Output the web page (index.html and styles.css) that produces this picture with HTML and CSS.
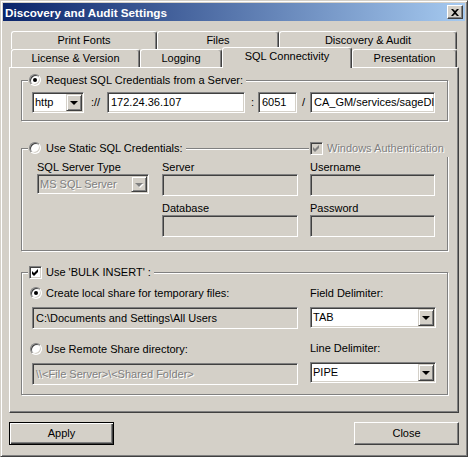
FILE: index.html
```html
<!DOCTYPE html>
<html lang="en">

<head>
    <meta charset="UTF-8">
    <meta name="viewport" content="width=device-width, initial-scale=1.0">
    <title>Discovery and Audit Settings</title>
    <link rel="stylesheet" href="styles.css">
</head>

<body>
    <div class="window">
        <div class="titlebar">
            <span class="title">Discovery and Audit Settings</span>
            <div class="close-btn">
                <svg width="8" height="7" viewBox="0 0 8 7"><path d="M0 0h2l2 2 2-2h2L5 3.5 8 7H6L4 5 2 7H0l3-3.5z" fill="#000"/></svg>
            </div>
        </div>

        <div class="content">
            <div class="tabs">
                <div class="tab-row">
                    <div class="tab w-print">Print Fonts</div>
                    <div class="tab w-files">Files</div>
                    <div class="tab w-disc">Discovery &amp; Audit</div>
                </div>
                <div class="tab-row">
                    <div class="tab w-license">License &amp; Version</div>
                    <div class="tab w-logging">Logging</div>
                    <div class="tab tab-active w-sql">SQL Connectivity</div>
                    <div class="tab w-pres">Presentation</div>
                </div>
            </div>

            <div class="panel">
                <!-- request credentials from server -->
                <div class="group group-server">
                    <div class="caption">
                        <span class="radio checked"></span>
                        <span>Request SQL Credentials from a Server:</span>
                    </div>
                    <div class="url-row">
                        <div class="combo w-http"><span class="combo-text">http</span><span class="drop"></span></div>
                        <span class="sep sep-proto">://</span>
                        <div class="edit w-host">172.24.36.107</div>
                        <span class="sep sep-colon">:</span>
                        <div class="edit w-port">6051</div>
                        <span class="sep sep-slash">/</span>
                        <div class="edit w-path">CA_GM/services/sageDI</div>
                    </div>
                </div>

                <!-- static credentials -->
                <div class="group group-static">
                    <div class="caption">
                        <span class="radio"></span>
                        <span>Use Static SQL Credentials:</span>
                    </div>
                    <div class="caption caption-right">
                        <span class="check check-disabled">
                            <svg width="7" height="7" viewBox="0 0 7 7"><path d="M0 2l2 2 4-4v3L2 7 0 5z"/></svg>
                        </span>
                        <span class="disabled-text">Windows Authentication</span>
                    </div>
                    <div class="cred-grid">
                        <div class="col col-type">
                            <div class="label">SQL Server Type</div>
                            <div class="combo combo-disabled"><span class="combo-text disabled-text">MS SQL Server</span><span class="drop"></span></div>
                        </div>
                        <div class="col col-server">
                            <div class="label">Server</div>
                            <div class="edit edit-disabled"></div>
                            <div class="label label-next">Database</div>
                            <div class="edit edit-disabled"></div>
                        </div>
                        <div class="col col-user">
                            <div class="label">Username</div>
                            <div class="edit edit-disabled"></div>
                            <div class="label label-next">Password</div>
                            <div class="edit edit-disabled"></div>
                        </div>
                    </div>
                </div>

                <!-- bulk insert -->
                <div class="group group-bulk">
                    <div class="caption">
                        <span class="check">
                            <svg width="7" height="7" viewBox="0 0 7 7"><path d="M0 2l2 2 4-4v3L2 7 0 5z"/></svg>
                        </span>
                        <span>Use 'BULK INSERT' :</span>
                    </div>
                    <div class="bulk-grid">
                        <div class="col col-share">
                            <div class="option"><span class="radio checked"></span>Create local share for temporary files:</div>
                            <div class="edit edit-disabled edit-field">C:\Documents and Settings\All Users</div>
                            <div class="option option-next"><span class="radio"></span>Use Remote Share directory:</div>
                            <div class="edit edit-disabled edit-field"><span class="disabled-text">\\&lt;File Server&gt;\&lt;Shared Folder&gt;</span></div>
                        </div>
                        <div class="col col-delim">
                            <div class="label">Field Delimiter:</div>
                            <div class="combo combo-field"><span class="combo-text">TAB</span><span class="drop"></span></div>
                            <div class="label label-line">Line Delimiter:</div>
                            <div class="combo combo-field"><span class="combo-text">PIPE</span><span class="drop"></span></div>
                        </div>
                    </div>
                </div>
            </div>

            <div class="buttons">
                <div class="btn btn-default">Apply</div>
                <div class="btn">Close</div>
            </div>
        </div>
    </div>
</body>

</html>
```

FILE: styles.css
```css
body {
    margin: 0;
    background: #D4D0C8;
    font-family: "Liberation Sans", Arial, sans-serif;
    font-size: 11px;
    color: #000;
}

.window {
    width: 468px;
    height: 457px;
    box-sizing: border-box;
    border: 1px solid;
    border-color: #D4D0C8 #404040 #404040 #D4D0C8;
    box-shadow: inset 1px 1px #fff, inset -1px -1px #808080;
    padding: 2px;
    background: #D4D0C8;
}

.titlebar {
    height: 18px;
    padding: 0 2px;
    display: flex;
    align-items: center;
    justify-content: space-between;
    background: linear-gradient(90deg, #0A246A, #A6CAF0);
    color: #fff;
    font-weight: bold;
    font-size: 11.7px;
}

.close-btn {
    width: 16px;
    height: 14px;
    box-sizing: border-box;
    background: #D4D0C8;
    border: 1px solid;
    border-color: #fff #404040 #404040 #fff;
    box-shadow: inset -1px -1px #808080;
    display: flex;
    align-items: center;
    justify-content: center;
}

.content {
    padding: 10px 0 0 6px;
}

/* tabs */
.tabs {
    padding-left: 2px;
}

.tab-row {
    display: flex;
    height: 18px;
}

.tab {
    box-sizing: border-box;
    height: 18px;
    border: 1px solid #fff;
    border-bottom: none;
    border-right-color: #404040;
    border-radius: 3px 3px 0 0;
    box-shadow: inset -1px 0 #808080;
    background: #D4D0C8;
    text-align: center;
    line-height: 17px;
    white-space: nowrap;
}

.tab-active {
    position: relative;
    top: -2px;
    height: 21px;
    z-index: 1;
}

.w-print { width: 146px; }
.w-files { width: 122px; }
.w-disc { width: 178px; }
.w-license { width: 129px; }
.w-logging { width: 82px; }
.w-sql { width: 130px; }
.w-pres { width: 105px; }

.panel {
    width: 450px;
    height: 346px;
    box-sizing: border-box;
    border: 1px solid;
    border-color: #fff #404040 #404040 #fff;
    box-shadow: inset -1px -1px #808080;
    padding: 12px 10px 0 11px;
}

/* group boxes */
.group {
    position: relative;
    border: 1px solid #808080;
    box-shadow: inset 1px 1px #fff, 1px 1px #fff;
}

.caption {
    position: absolute;
    top: -8px;
    left: 6px;
    height: 14px;
    padding: 0 3px 0 1px;
    display: flex;
    align-items: center;
    background: #D4D0C8;
    white-space: nowrap;
}

.caption .radio {
    margin-right: 5px;
}

.caption .check {
    margin-right: 4px;
}

.caption-right {
    left: 287px;
    width: 140px;
    padding-bottom: 2px;
}

.group-server {
    padding: 11px 0 7px 10px;
}

.group-static {
    margin-top: 27px;
    padding: 11px 0 13px 15px;
}

.group-bulk {
    margin-top: 21px;
    padding: 13px 0 9px 10px;
}

/* url row */
.url-row {
    display: flex;
    align-items: center;
    height: 21px;
}

.sep {
    box-sizing: border-box;
    line-height: 21px;
}

.sep-proto { width: 23px; padding-left: 7px; }
.sep-colon { width: 13px; padding-left: 6px; }
.sep-slash { width: 13px; padding-left: 5px; }

.w-http { width: 52px; }
.w-host { width: 138px; }
.w-port { width: 39px; }
.w-path { width: 125px; }

/* controls */
.edit {
    box-sizing: border-box;
    height: 21px;
    border: 1px solid;
    border-color: #808080 #fff #fff #808080;
    box-shadow: inset 1px 1px #404040, inset -1px -1px #D4D0C8;
    background: #fff;
    padding: 0 3px;
    line-height: 19px;
    white-space: nowrap;
    overflow: hidden;
}

.edit-disabled {
    height: 22px;
    background: #D4D0C8;
    line-height: 20px;
}

.combo {
    box-sizing: border-box;
    height: 21px;
    border: 1px solid;
    border-color: #808080 #fff #fff #808080;
    box-shadow: inset 1px 1px #404040, inset -1px -1px #D4D0C8;
    background: #fff;
    padding: 1px;
    display: flex;
}

.combo-text {
    flex: 1;
    padding-left: 1px;
    line-height: 17px;
    white-space: nowrap;
    overflow: hidden;
}

.combo-disabled {
    height: 20px;
    background: #D4D0C8;
}

.combo-disabled .combo-text {
    line-height: 16px;
}

.drop {
    width: 16px;
    box-sizing: border-box;
    background: #D4D0C8;
    border: 1px solid;
    border-color: #D4D0C8 #404040 #404040 #D4D0C8;
    box-shadow: inset 1px 1px #fff, inset -1px -1px #808080;
    display: flex;
    align-items: center;
    justify-content: center;
}

.drop::after {
    content: "";
    border: 4px solid transparent;
    border-top-color: #000;
    border-bottom: 0;
    margin-top: 1px;
}

.combo-disabled .drop::after {
    border-top-color: #808080;
    filter: drop-shadow(1px 1px 0 #fff);
}

.radio {
    width: 12px;
    height: 12px;
    box-sizing: border-box;
    border-radius: 50%;
    border: 1px solid;
    border-color: #808080 #fff #fff #808080;
    box-shadow: inset 1px 1px #404040, inset -1px -1px #D4D0C8;
    background: #fff;
    position: relative;
    flex: none;
}

.radio.checked::after {
    content: "";
    position: absolute;
    left: 3px;
    top: 3px;
    width: 4px;
    height: 4px;
    border-radius: 50%;
    background: #000;
}

.check {
    width: 13px;
    height: 13px;
    box-sizing: border-box;
    border: 1px solid;
    border-color: #808080 #fff #fff #808080;
    box-shadow: inset 1px 1px #404040, inset -1px -1px #D4D0C8;
    background: #fff;
    flex: none;
    display: flex;
    align-items: center;
    justify-content: center;
}

.check-disabled {
    background: #D4D0C8;
}

.check-disabled svg {
    fill: #808080;
}

.disabled-text {
    color: #808080;
    text-shadow: 1px 1px #fff;
}

/* static credentials grid */
.cred-grid,
.bulk-grid {
    display: flex;
}

.label {
    height: 14px;
    line-height: 14px;
    white-space: nowrap;
}

.label-next {
    margin-top: 5px;
}

.col-type { width: 112px; margin-right: 13px; }
.col-server { width: 136px; margin-right: 12px; }
.col-user { width: 125px; }

/* bulk insert */
.col-share { width: 266px; margin-right: 12px; }
.col-delim { width: 126px; }

.option {
    height: 14px;
    margin-left: -2px;
    display: flex;
    align-items: center;
    white-space: nowrap;
}

.option .radio {
    margin-right: 4px;
}

.option-next {
    margin-top: 13px;
}

.edit-field {
    margin-top: 7px;
}

.combo-field {
    margin-top: 7px;
}

.label-line {
    margin-top: 13px;
}

/* bottom buttons */
.buttons {
    width: 450px;
    margin-top: 9px;
    display: flex;
    justify-content: space-between;
}

.btn {
    width: 105px;
    height: 23px;
    box-sizing: border-box;
    border: 1px solid;
    border-color: #fff #404040 #404040 #fff;
    box-shadow: inset -1px -1px #808080;
    text-align: center;
    line-height: 21px;
}

.btn-default {
    border-color: #000;
    box-shadow: inset 1px 1px #fff, inset -1px -1px #404040, inset -2px -2px #808080;
}
```
